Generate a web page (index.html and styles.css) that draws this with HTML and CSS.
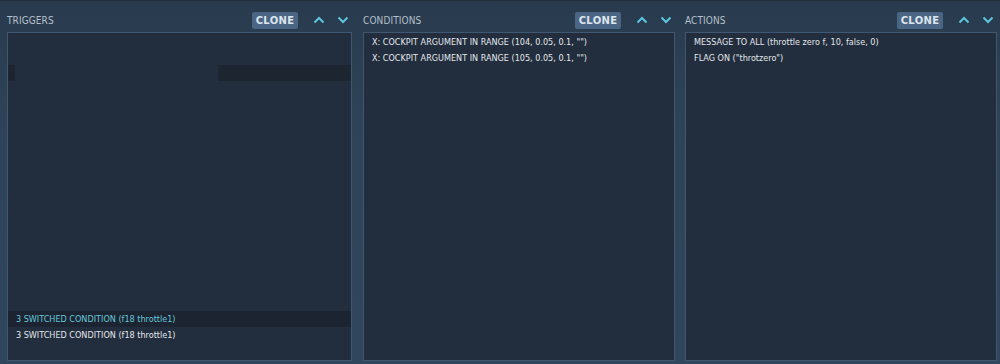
FILE: index.html
```html
<!DOCTYPE html>
<html>
<head>
    <meta charset="UTF-8">
    <title>Triggers</title>
    <link rel="stylesheet" href="styles.css">
</head>
<body>
    <div class="panel panel-triggers">
        <div class="panel-head">
            <span class="panel-title">TRIGGERS</span>
            <button class="btn-clone">CLONE</button>
            <span class="arrow">
                <svg width="12" height="8" viewBox="0 0 12 8"><path d="M1.5 6.5 L6 2 L10.5 6.5" /></svg>
            </span>
            <span class="arrow">
                <svg width="12" height="8" viewBox="0 0 12 8"><path d="M1.5 1.5 L6 6 L10.5 1.5" /></svg>
            </span>
        </div>
        <div class="list">
            <div class="list-fill">
                <div class="ghost-row">
                    <span class="ghost-left"></span>
                    <span class="ghost-right"></span>
                </div>
            </div>
            <div class="list-item active">3 SWITCHED CONDITION (f18 throttle1)</div>
            <div class="list-item">3 SWITCHED CONDITION (f18 throttle1)</div>
            <div class="list-tail"></div>
        </div>
    </div>

    <div class="panel">
        <div class="panel-head">
            <span class="panel-title">CONDITIONS</span>
            <button class="btn-clone">CLONE</button>
            <span class="arrow">
                <svg width="12" height="8" viewBox="0 0 12 8"><path d="M1.5 6.5 L6 2 L10.5 6.5" /></svg>
            </span>
            <span class="arrow">
                <svg width="12" height="8" viewBox="0 0 12 8"><path d="M1.5 1.5 L6 6 L10.5 1.5" /></svg>
            </span>
        </div>
        <div class="list">
            <div class="list-item">X: COCKPIT ARGUMENT IN RANGE (104, 0.05, 0.1, "")</div>
            <div class="list-item">X: COCKPIT ARGUMENT IN RANGE (105, 0.05, 0.1, "")</div>
        </div>
    </div>

    <div class="panel">
        <div class="panel-head">
            <span class="panel-title">ACTIONS</span>
            <button class="btn-clone">CLONE</button>
            <span class="arrow">
                <svg width="12" height="8" viewBox="0 0 12 8"><path d="M1.5 6.5 L6 2 L10.5 6.5" /></svg>
            </span>
            <span class="arrow">
                <svg width="12" height="8" viewBox="0 0 12 8"><path d="M1.5 1.5 L6 6 L10.5 1.5" /></svg>
            </span>
        </div>
        <div class="list">
            <div class="list-item">MESSAGE TO ALL (throttle zero f, 10, false, 0)</div>
            <div class="list-item">FLAG ON ("throtzero")</div>
        </div>
    </div>
</body>
</html>
```

FILE: styles.css
```css
html, body {
    height: 100%;
}

body {
    margin: 0;
    padding: 0 3px 3px 7px;
    box-sizing: border-box;
    font-family: "DejaVu Sans", Verdana, sans-serif;
    font-stretch: condensed;
    background: linear-gradient(to bottom, #293a4d 0%, #2e4357 30%, #30465c 100%);
    border-top: 1px solid #1f2c3a;
    display: grid;
    grid-template-columns: 346px 312px 312px;
    column-gap: 10px;
    overflow: hidden;
}

.panel-triggers {
    margin-right: 1px;
}

.panel {
    display: flex;
    flex-direction: column;
    min-height: 0;
}

.panel-head {
    height: 31px;
    display: flex;
    align-items: center;
    padding-top: 7px;
    box-sizing: border-box;
}

.panel-title {
    flex: 1;
    font-size: 10px;
    color: #b4c0cc;
    letter-spacing: 0.1px;
}

.btn-clone {
    width: 46px;
    height: 17px;
    padding: 0;
    border: none;
    border-radius: 2px;
    background-color: #4a6684;
    color: #dde5ee;
    font-family: "DejaVu Sans", Verdana, sans-serif;
    font-size: 10px;
    font-weight: bold;
    letter-spacing: 0.3px;
    margin-right: 12px;
}

.arrow {
    width: 18px;
    display: flex;
    justify-content: center;
}

.arrow + .arrow {
    margin-left: 6px;
}

.arrow svg path {
    fill: none;
    stroke: #5cc6df;
    stroke-width: 2;
}

.list {
    flex: 1;
    background-color: #222e3d;
    border: 1px solid #3f5770;
    display: flex;
    flex-direction: column;
    padding-top: 1px;
}

.list-item {
    height: 16px;
    line-height: 16px;
    padding-left: 8px;
    font-size: 9px;
    color: #e2e7ec;
    white-space: nowrap;
}

.list-item.active {
    background-color: #1b2430;
    color: #68c6dc;
}

.list-fill {
    flex: 1;
    padding-top: 31px;
}

.ghost-row {
    height: 16px;
    display: flex;
    justify-content: space-between;
}

.ghost-left {
    width: 7px;
    background-color: #1c2530;
}

.ghost-right {
    width: 133px;
    background-color: #1c2530;
}

.list-tail {
    height: 17px;
}
```
